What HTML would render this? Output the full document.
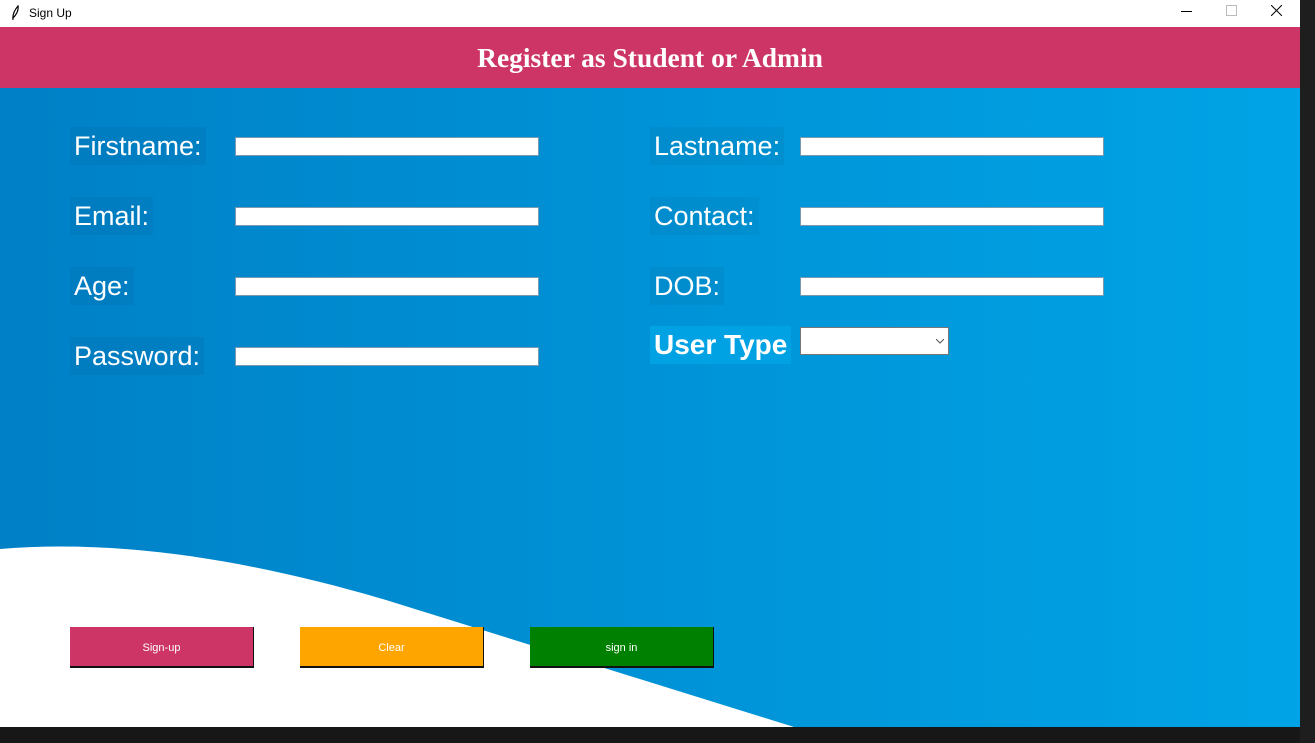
<!DOCTYPE html>
<html><head><style>
body{margin:0;width:1315px;height:743px;overflow:hidden;background:#171717;font-family:"Liberation Sans",sans-serif;position:relative}
.tb{position:absolute;left:0;top:0;width:1300px;height:27px;background:#fff}
.tb span{position:absolute;left:29px;top:6px;font-size:12px;color:#000}
.side{position:absolute;left:1300px;top:0;width:15px;height:743px;background:#1e1e1e}
.main{position:absolute;left:0;top:27px;width:1300px;height:700px;background:linear-gradient(90deg,#0080c6,#00a4e6)}
.hdr{position:absolute;left:0;top:0;width:1300px;height:61px;background:#cc3566;color:#fff;font:bold 27.5px "Liberation Serif",serif;text-align:center;line-height:61px}
.l{position:absolute;color:#fff;font-size:27px;line-height:38px;padding:0 4px;background:rgba(0,0,0,0.04)}
.i{position:absolute;width:302px;height:17px;background:#fff;border:1px solid #7a9ab0}
.b{position:absolute;top:600px;width:183px;height:39px;color:#fff;font-size:11px;text-align:center;line-height:42px;border-bottom:2px solid #111;border-right:1px solid #111}
</style></head><body>
<div class="tb"><span>Sign Up</span>
<svg style="position:absolute;left:10px;top:5px" width="10" height="16"><path d="M3 15 Q2 8 8 1 Q9 7 3 13" fill="none" stroke="#000" stroke-width="1.2"/></svg>
<div style="position:absolute;left:1181px;top:11px;width:11px;height:1px;background:#000"></div>
<div style="position:absolute;left:1226px;top:5px;width:9px;height:9px;border:1px solid #bbb"></div>
<svg style="position:absolute;left:1271px;top:5px" width="11" height="11"><path d="M0 0L11 11M11 0L0 11" stroke="#000"/></svg>
</div>
<div class="side"></div>
<div class="main">
<div class="hdr">Register as Student or Admin</div>
<svg style="position:absolute;left:0;top:0" width="1300" height="700"><path d="M0,522 C120,512 250,533 386,573 L794,700 L0,700Z" fill="#fff"/></svg>
<div class="l" style="left:70px;top:100px">Firstname:</div>
<div class="l" style="left:70px;top:170px">Email:</div>
<div class="l" style="left:70px;top:240px">Age:</div>
<div class="l" style="left:70px;top:310px">Password:</div>
<div class="i" style="left:235px;top:110px"></div>
<div class="i" style="left:235px;top:180px"></div>
<div class="i" style="left:235px;top:250px"></div>
<div class="i" style="left:235px;top:320px"></div>
<div class="l" style="left:650px;top:100px">Lastname:</div>
<div class="l" style="left:650px;top:170px">Contact:</div>
<div class="l" style="left:650px;top:240px">DOB:</div>
<div class="l" style="left:650px;top:299px;font-weight:bold;font-size:28px;background:#00a2e4">User Type</div>
<div class="i" style="left:800px;top:110px"></div>
<div class="i" style="left:800px;top:180px"></div>
<div class="i" style="left:800px;top:250px"></div>
<div style="position:absolute;left:800px;top:300px;width:147px;height:26px;background:#fff;border:1px solid #777"><svg style="position:absolute;left:135px;top:11px" width="8" height="5"><path d="M0 0L4 4L8 0" fill="none" stroke="#555"/></svg></div>
<div class="b" style="left:70px;background:#cc3566">Sign-up</div>
<div class="b" style="left:300px;background:#ffa500">Clear</div>
<div class="b" style="left:530px;background:#008000">sign in</div>
</div>
</body></html>
